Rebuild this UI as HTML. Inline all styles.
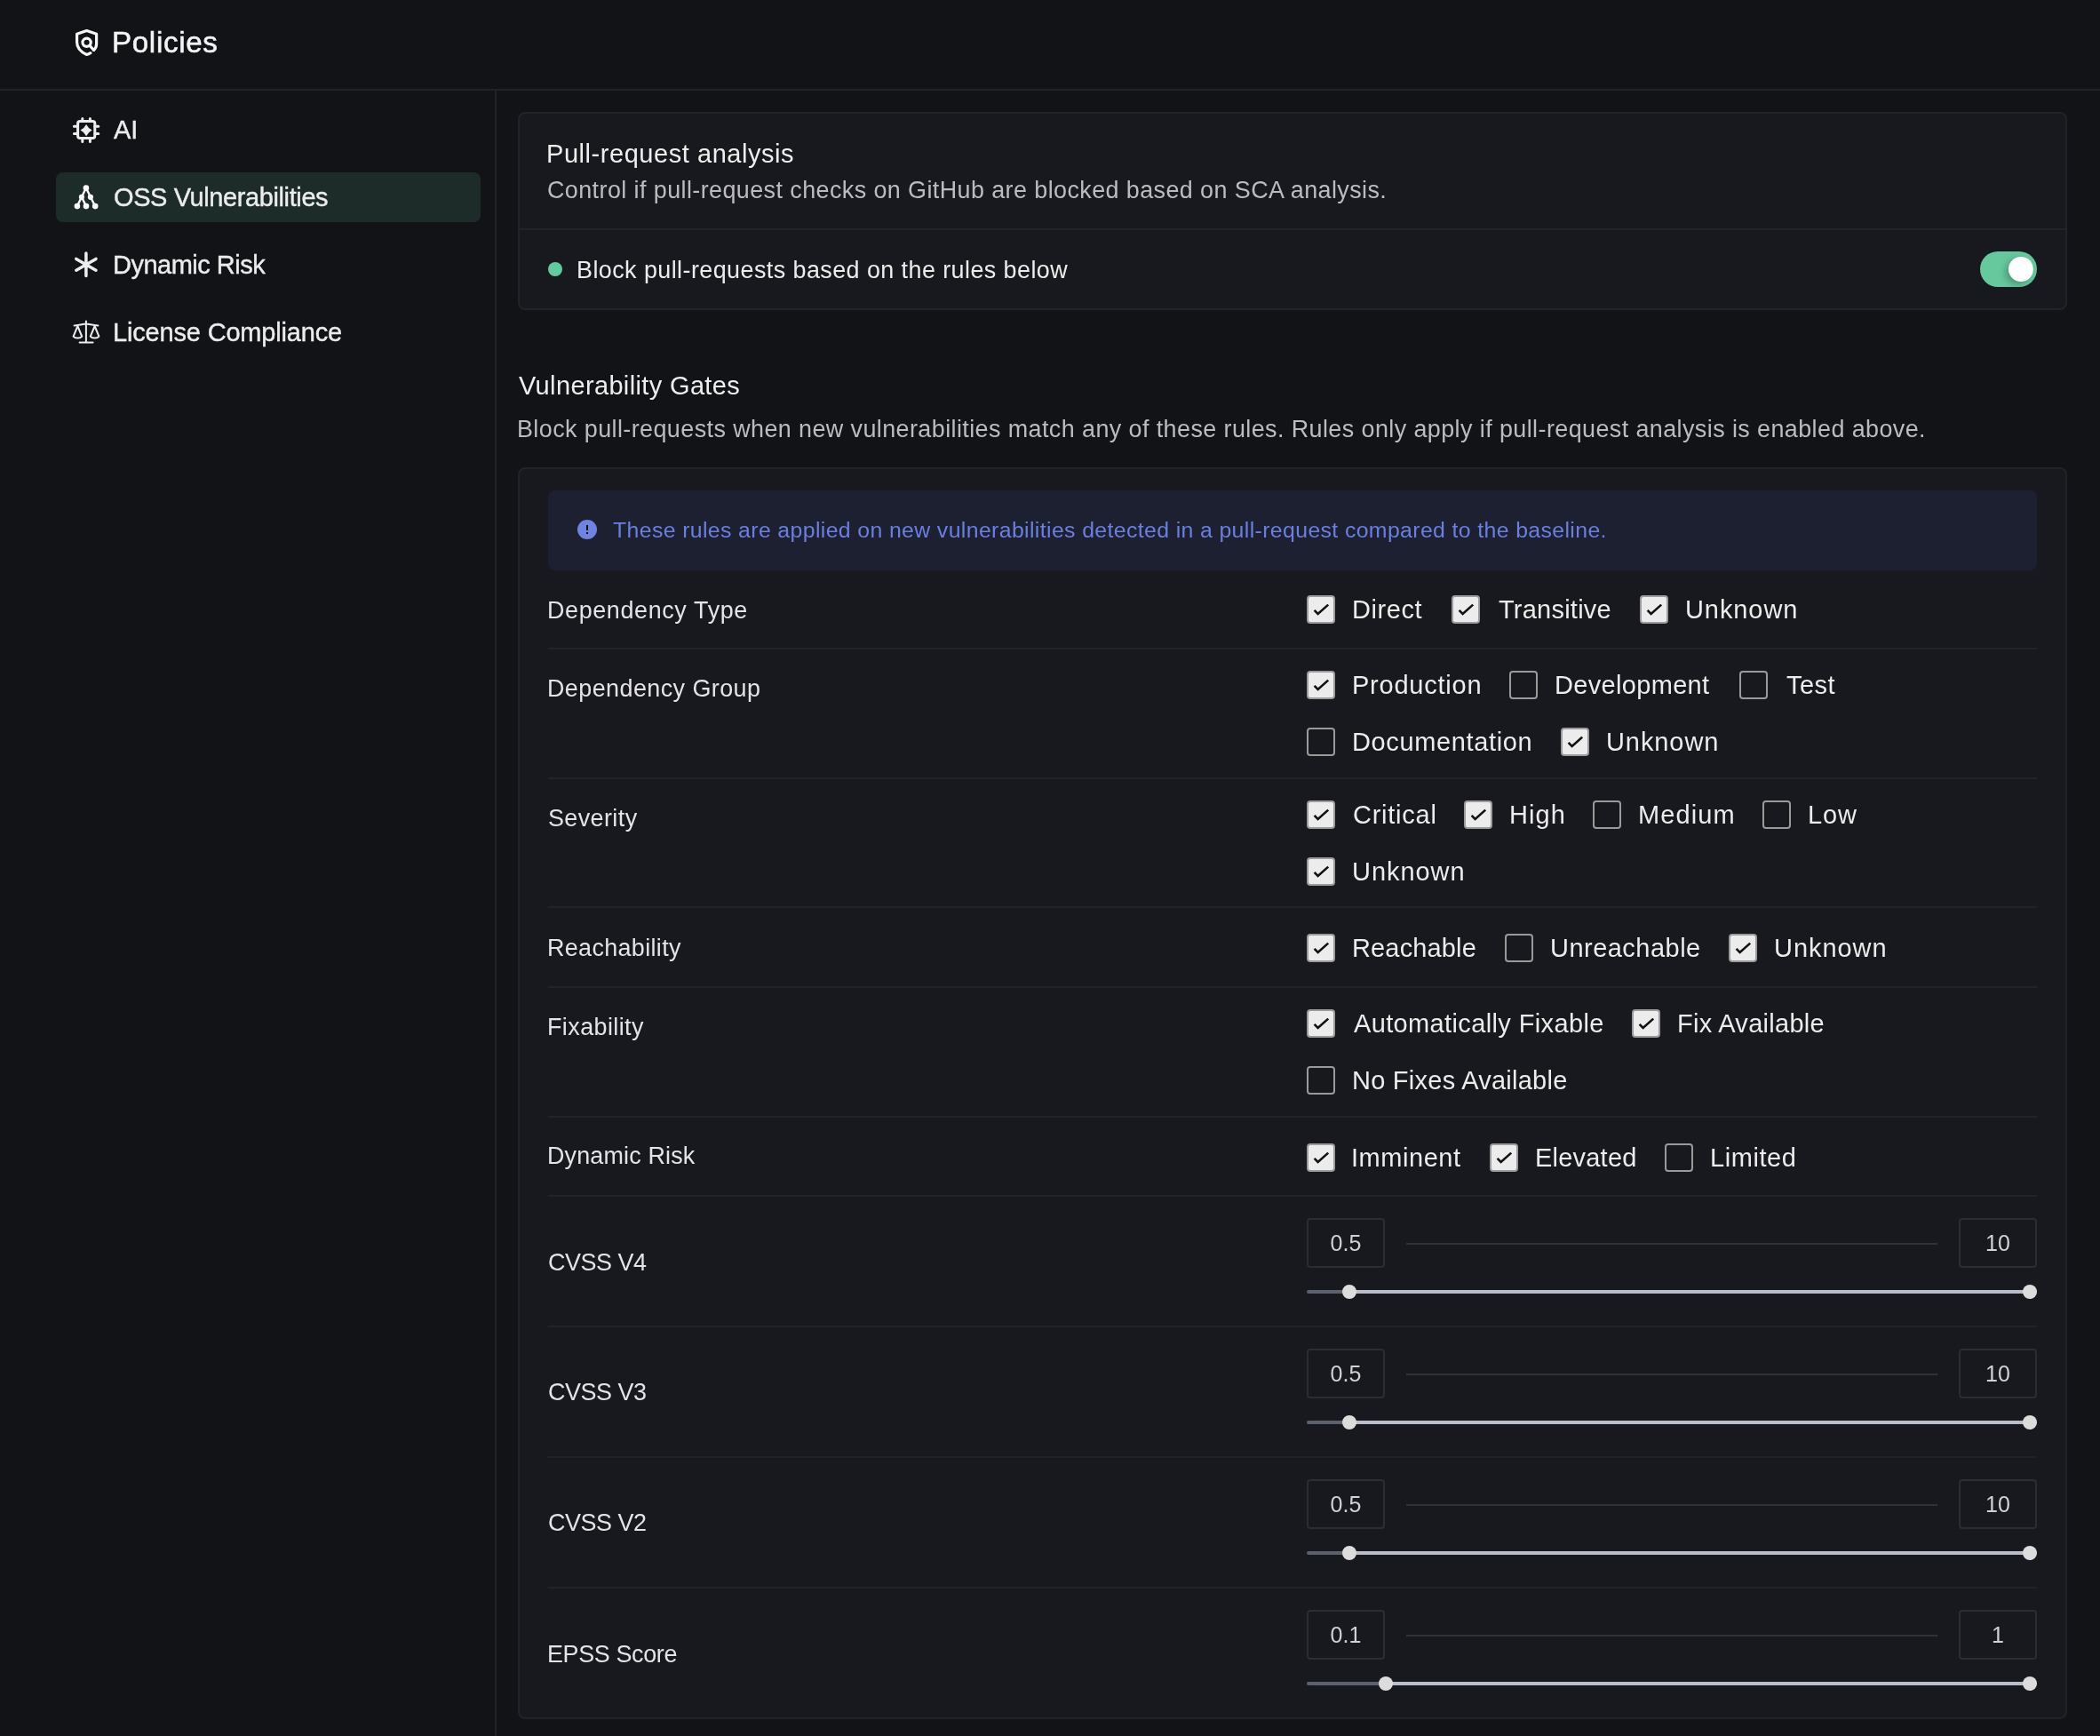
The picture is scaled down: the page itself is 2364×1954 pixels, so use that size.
<!DOCTYPE html>
<html><head><meta charset="utf-8">
<style>
html,body{-webkit-font-smoothing:antialiased;margin:0;padding:0;width:2364px;height:1954px;overflow:hidden;background:#121317;font-family:"Liberation Sans",sans-serif;}
.t{position:absolute;white-space:pre;will-change:transform;font-family:"Liberation Sans",sans-serif;}
.abs{position:absolute;}
#header{position:absolute;left:0;top:0;width:2364px;height:100px;background:#121317;border-bottom:2px solid #212226;}
#sidebar{position:absolute;left:0;top:102px;width:557px;height:1852px;border-right:2px solid #212226;}
.navhl{position:absolute;left:63px;top:194px;width:478px;height:56px;border-radius:8px;background:#1e2c29;}
.card{position:absolute;left:583px;width:1740px;background:#18191e;border:2px solid #222328;border-radius:8px;}
.hr{position:absolute;left:617px;width:1676px;height:2px;background:#222328;}
.banner{position:absolute;left:617px;top:552px;width:1676px;height:90px;border-radius:8px;background:#1d2031;}
.cb{position:absolute;width:28px;height:28px;border:2px solid #9a9a9b;border-radius:4px;}
.cb.on{background:#ececec;border-color:#9c9c9e;}
.cb svg{position:absolute;left:-2px;top:-2px;}
.inp{position:absolute;will-change:transform;font-family:"Liberation Sans",sans-serif;width:84px;height:52px;border:2px solid #2b2d35;border-radius:4px;color:#d2d2d4;font-size:25px;line-height:52px;text-align:center;letter-spacing:0px;}
.sep{position:absolute;left:1583px;width:598px;height:2px;background:#2f323a;}
.trk{position:absolute;height:4px;border-radius:2px;}
.thm{position:absolute;width:16px;height:16px;border-radius:50%;background:#dcdcdd;}
</style></head><body>
<div id="header"></div>
<div id="sidebar"></div>
<div class="navhl"></div>
<div class="card" style="top:126px;height:219px;"></div>
<div class="abs" style="left:585px;top:257px;width:1740px;height:2px;background:#222328"></div>
<div class="card" style="top:526px;height:1405px;"></div>
<div class="banner"></div>
<div class="hr" style="top:729px"></div>
<div class="hr" style="top:875px"></div>
<div class="hr" style="top:1020px"></div>
<div class="hr" style="top:1110px"></div>
<div class="hr" style="top:1256px"></div>
<div class="hr" style="top:1345px"></div>
<div class="hr" style="top:1492px"></div>
<div class="hr" style="top:1639px"></div>
<div class="hr" style="top:1786px"></div>
<svg class="abs" style="left:0;top:0" width="600" height="420" viewBox="0 0 600 420">
 <g fill="none" stroke="#f6f6f6" stroke-width="3.2" stroke-linecap="round" stroke-linejoin="round">
  <path d="M101.9 59.7C100.4 60.6 99 61.2 97.6 61.5C91 58.5 86.6 54 86.6 47.5L86.6 38.2L97.6 34.6L108.6 38.2L108.6 49.5C108.6 52 107.6 54.5 105.6 56.4"/>
  <circle cx="97.6" cy="47.8" r="4.65"/>
  <path d="M100.9 51.2L105.6 56.4"/>
 </g>
 <g fill="none" stroke="#ededee" stroke-width="3" stroke-linecap="round" stroke-linejoin="round">
  <rect x="87.6" y="136.4" width="19.2" height="19.2" rx="2.5"/>
  <path d="M92.8 133.4V136.4M101.4 133.4V136.4M92.8 155.6V159.6M101.4 155.6V159.6M83.4 142.2H87.6M83.4 150.6H87.6M106.8 142.2H110.8M106.8 150.6H110.8"/>
 </g>
 <path fill="#ededee" d="M97.1 140 Q99.3 144.4 103.7 146.6 Q99.3 148.8 97.1 153.2 Q94.9 148.8 90.5 146.6 Q94.9 144.4 97.1 140Z"/>
 <g stroke="#fafafa" stroke-width="2.4" fill="none">
  <path d="M96.9 211.5L91.9 221.8L86.9 232.1M91.9 221.8L97 232.1M96.9 211.5L101.9 221.8L107.2 232.1"/>
 </g>
 <g fill="#fafafa">
  <circle cx="96.9" cy="211.6" r="3.3"/><circle cx="91.9" cy="221.8" r="3.1"/><circle cx="101.9" cy="221.8" r="3.1"/>
  <circle cx="86.9" cy="232.1" r="3.3"/><circle cx="97" cy="232.1" r="3.3"/><circle cx="107.2" cy="232.1" r="3.3"/>
 </g>
 <g stroke="#ededee" stroke-width="3.5" stroke-linecap="round">
  <path d="M96.9 285V310.6M85.8 291.4L108 304.2M85.8 304.2L108 291.4"/>
 </g>
 <g fill="none" stroke="#ededee" stroke-width="2" stroke-linecap="round" stroke-linejoin="round">
  <path d="M96.9 361.5V385.6M89.6 385.6H104.6M83.6 366.4C90 366.4 93 364.6 96.9 364.6C100.8 364.6 103.8 366.4 110.4 366.4"/>
  <path d="M87.4 367L82.6 378.6C84.6 381.2 90.2 381.2 92.2 378.6Z"/>
  <path d="M106.6 367L101.8 378.6C103.8 381.2 109.4 381.2 111.4 378.6Z"/>
 </g>
</svg>
<svg class="abs" style="left:640px;top:575px" width="44" height="44" viewBox="0 0 44 44">
 <circle cx="21" cy="21" r="11" fill="#7083e0"/>
 <rect x="20" y="16" width="2" height="6" fill="#111318"/>
 <rect x="20" y="24" width="2" height="2" fill="#111318"/>
</svg>
<div class="abs" style="left:617px;top:295px;width:16px;height:16px;border-radius:50%;background:#66c89e"></div>
<div class="abs" style="left:2229px;top:283px;width:64px;height:40px;border-radius:20px;background:#66c99e;overflow:hidden">
  <div class="abs" style="left:32px;top:6px;width:28px;height:28px;border-radius:50%;background:#fff;box-shadow:-3px 3px 8px rgba(0,0,0,0.28)"></div>
</div>
<div class="cb on" style="left:1471.0px;top:670px"><svg width="32" height="32" viewBox="0 0 32 32"><path d="M8.6 16.9 L12.6 20.9 L24.2 10.6" fill="none" stroke="#111214" stroke-width="2.6"/></svg></div>
<div class="cb on" style="left:1634.4px;top:670px"><svg width="32" height="32" viewBox="0 0 32 32"><path d="M8.6 16.9 L12.6 20.9 L24.2 10.6" fill="none" stroke="#111214" stroke-width="2.6"/></svg></div>
<div class="cb on" style="left:1846.0px;top:670px"><svg width="32" height="32" viewBox="0 0 32 32"><path d="M8.6 16.9 L12.6 20.9 L24.2 10.6" fill="none" stroke="#111214" stroke-width="2.6"/></svg></div>
<div class="cb on" style="left:1471.0px;top:755px"><svg width="32" height="32" viewBox="0 0 32 32"><path d="M8.6 16.9 L12.6 20.9 L24.2 10.6" fill="none" stroke="#111214" stroke-width="2.6"/></svg></div>
<div class="cb" style="left:1699.4px;top:755px"></div>
<div class="cb" style="left:1957.5px;top:755px"></div>
<div class="cb" style="left:1471.0px;top:819px"></div>
<div class="cb on" style="left:1756.6px;top:819px"><svg width="32" height="32" viewBox="0 0 32 32"><path d="M8.6 16.9 L12.6 20.9 L24.2 10.6" fill="none" stroke="#111214" stroke-width="2.6"/></svg></div>
<div class="cb on" style="left:1471.0px;top:901px"><svg width="32" height="32" viewBox="0 0 32 32"><path d="M8.6 16.9 L12.6 20.9 L24.2 10.6" fill="none" stroke="#111214" stroke-width="2.6"/></svg></div>
<div class="cb on" style="left:1647.9px;top:901px"><svg width="32" height="32" viewBox="0 0 32 32"><path d="M8.6 16.9 L12.6 20.9 L24.2 10.6" fill="none" stroke="#111214" stroke-width="2.6"/></svg></div>
<div class="cb" style="left:1793.2px;top:901px"></div>
<div class="cb" style="left:1983.6px;top:901px"></div>
<div class="cb on" style="left:1471.0px;top:965px"><svg width="32" height="32" viewBox="0 0 32 32"><path d="M8.6 16.9 L12.6 20.9 L24.2 10.6" fill="none" stroke="#111214" stroke-width="2.6"/></svg></div>
<div class="cb on" style="left:1471.0px;top:1051px"><svg width="32" height="32" viewBox="0 0 32 32"><path d="M8.6 16.9 L12.6 20.9 L24.2 10.6" fill="none" stroke="#111214" stroke-width="2.6"/></svg></div>
<div class="cb" style="left:1694.1px;top:1051px"></div>
<div class="cb on" style="left:1946.0px;top:1051px"><svg width="32" height="32" viewBox="0 0 32 32"><path d="M8.6 16.9 L12.6 20.9 L24.2 10.6" fill="none" stroke="#111214" stroke-width="2.6"/></svg></div>
<div class="cb on" style="left:1471.0px;top:1136px"><svg width="32" height="32" viewBox="0 0 32 32"><path d="M8.6 16.9 L12.6 20.9 L24.2 10.6" fill="none" stroke="#111214" stroke-width="2.6"/></svg></div>
<div class="cb on" style="left:1836.6px;top:1136px"><svg width="32" height="32" viewBox="0 0 32 32"><path d="M8.6 16.9 L12.6 20.9 L24.2 10.6" fill="none" stroke="#111214" stroke-width="2.6"/></svg></div>
<div class="cb" style="left:1471.0px;top:1200px"></div>
<div class="cb on" style="left:1471.0px;top:1287px"><svg width="32" height="32" viewBox="0 0 32 32"><path d="M8.6 16.9 L12.6 20.9 L24.2 10.6" fill="none" stroke="#111214" stroke-width="2.6"/></svg></div>
<div class="cb on" style="left:1676.9px;top:1287px"><svg width="32" height="32" viewBox="0 0 32 32"><path d="M8.6 16.9 L12.6 20.9 L24.2 10.6" fill="none" stroke="#111214" stroke-width="2.6"/></svg></div>
<div class="cb" style="left:1874.3px;top:1287px"></div>
<div class="inp" style="left:1471px;top:1371px">0.5</div>
<div class="inp" style="left:2205px;top:1371px">10</div>
<div class="sep" style="top:1399px"></div>
<div class="trk" style="top:1452px;left:1471px;width:48.3px;background:#5d616b"></div>
<div class="trk" style="top:1452px;left:1519.3px;width:773.7px;background:#b8bdc7"></div>
<div class="thm" style="top:1446px;left:1511.3px"></div>
<div class="thm" style="top:1446px;left:2277px"></div>
<div class="inp" style="left:1471px;top:1518px">0.5</div>
<div class="inp" style="left:2205px;top:1518px">10</div>
<div class="sep" style="top:1546px"></div>
<div class="trk" style="top:1599px;left:1471px;width:48.3px;background:#5d616b"></div>
<div class="trk" style="top:1599px;left:1519.3px;width:773.7px;background:#b8bdc7"></div>
<div class="thm" style="top:1593px;left:1511.3px"></div>
<div class="thm" style="top:1593px;left:2277px"></div>
<div class="inp" style="left:1471px;top:1665px">0.5</div>
<div class="inp" style="left:2205px;top:1665px">10</div>
<div class="sep" style="top:1693px"></div>
<div class="trk" style="top:1746px;left:1471px;width:48.3px;background:#5d616b"></div>
<div class="trk" style="top:1746px;left:1519.3px;width:773.7px;background:#b8bdc7"></div>
<div class="thm" style="top:1740px;left:1511.3px"></div>
<div class="thm" style="top:1740px;left:2277px"></div>
<div class="inp" style="left:1471px;top:1812px">0.1</div>
<div class="inp" style="left:2205px;top:1812px">1</div>
<div class="sep" style="top:1840px"></div>
<div class="trk" style="top:1893px;left:1471px;width:88.6px;background:#5d616b"></div>
<div class="trk" style="top:1893px;left:1559.6px;width:733.4px;background:#b8bdc7"></div>
<div class="thm" style="top:1887px;left:1551.6px"></div>
<div class="thm" style="top:1887px;left:2277px"></div>
<div class="t" style="left:126.0px;top:31.16px;font-size:33.12px;line-height:33.12px;letter-spacing:0.686px;color:#f4f4f5;-webkit-text-stroke:0.55px currentColor">Policies</div>
<div class="t" style="left:128.0px;top:132.17px;font-size:28.98px;line-height:28.98px;letter-spacing:0.000px;color:#ececed;-webkit-text-stroke:0.40px currentColor">AI</div>
<div class="t" style="left:127.5px;top:207.97px;font-size:28.98px;line-height:28.98px;letter-spacing:-0.383px;color:#ececed;-webkit-text-stroke:0.40px currentColor">OSS Vulnerabilities</div>
<div class="t" style="left:127.0px;top:284.17px;font-size:28.98px;line-height:28.98px;letter-spacing:-0.491px;color:#ececed;-webkit-text-stroke:0.40px currentColor">Dynamic Risk</div>
<div class="t" style="left:127.0px;top:360.27px;font-size:28.98px;line-height:28.98px;letter-spacing:-0.159px;color:#ececed;-webkit-text-stroke:0.40px currentColor">License Compliance</div>
<div class="t" style="left:615.0px;top:159.27px;font-size:28.98px;line-height:28.98px;letter-spacing:0.565px;color:#eeeeef">Pull-request analysis</div>
<div class="t" style="left:616.0px;top:201.02px;font-size:26.91px;line-height:26.91px;letter-spacing:0.419px;color:#bcbcc0">Control if pull-request checks on GitHub are blocked based on SCA analysis.</div>
<div class="t" style="left:649.0px;top:290.82px;font-size:26.91px;line-height:26.91px;letter-spacing:0.435px;color:#ececed">Block pull-requests based on the rules below</div>
<div class="t" style="left:584.0px;top:420.27px;font-size:28.98px;line-height:28.98px;letter-spacing:0.372px;color:#eeeeef">Vulnerability Gates</div>
<div class="t" style="left:582.0px;top:470.32px;font-size:26.91px;line-height:26.91px;letter-spacing:0.419px;color:#bcbcc0">Block pull-requests when new vulnerabilities match any of these rules. Rules only apply if pull-request analysis is enabled above.</div>
<div class="t" style="left:690.0px;top:585.47px;font-size:24.84px;line-height:24.84px;letter-spacing:0.372px;color:#6b7fe0">These rules are applied on new vulnerabilities detected in a pull-request compared to the baseline.</div>
<div class="t" style="left:616.0px;top:673.52px;font-size:26.91px;line-height:26.91px;letter-spacing:0.636px;color:#e4e4e6">Dependency Type</div>
<div class="t" style="left:1522.0px;top:672.27px;font-size:28.98px;line-height:28.98px;letter-spacing:0.600px;color:#ececed">Direct</div>
<div class="t" style="left:1687.4px;top:672.27px;font-size:28.98px;line-height:28.98px;letter-spacing:0.244px;color:#ececed">Transitive</div>
<div class="t" style="left:1897.0px;top:672.27px;font-size:28.98px;line-height:28.98px;letter-spacing:0.933px;color:#ececed">Unknown</div>
<div class="t" style="left:616.0px;top:762.32px;font-size:26.91px;line-height:26.91px;letter-spacing:0.440px;color:#e4e4e6">Dependency Group</div>
<div class="t" style="left:1522.0px;top:757.27px;font-size:28.98px;line-height:28.98px;letter-spacing:0.778px;color:#ececed">Production</div>
<div class="t" style="left:1750.4px;top:757.27px;font-size:28.98px;line-height:28.98px;letter-spacing:0.340px;color:#ececed">Development</div>
<div class="t" style="left:2010.5px;top:757.27px;font-size:28.98px;line-height:28.98px;letter-spacing:0.500px;color:#ececed">Test</div>
<div class="t" style="left:1522.0px;top:821.27px;font-size:28.98px;line-height:28.98px;letter-spacing:0.650px;color:#ececed">Documentation</div>
<div class="t" style="left:1807.6px;top:821.27px;font-size:28.98px;line-height:28.98px;letter-spacing:0.933px;color:#ececed">Unknown</div>
<div class="t" style="left:617.0px;top:908.02px;font-size:26.91px;line-height:26.91px;letter-spacing:0.414px;color:#e4e4e6">Severity</div>
<div class="t" style="left:1523.0px;top:903.27px;font-size:28.98px;line-height:28.98px;letter-spacing:0.757px;color:#ececed">Critical</div>
<div class="t" style="left:1698.9px;top:903.27px;font-size:28.98px;line-height:28.98px;letter-spacing:1.100px;color:#ececed">High</div>
<div class="t" style="left:1844.2px;top:903.27px;font-size:28.98px;line-height:28.98px;letter-spacing:1.100px;color:#ececed">Medium</div>
<div class="t" style="left:2034.6px;top:903.27px;font-size:28.98px;line-height:28.98px;letter-spacing:0.950px;color:#ececed">Low</div>
<div class="t" style="left:1522.0px;top:967.27px;font-size:28.98px;line-height:28.98px;letter-spacing:0.967px;color:#ececed">Unknown</div>
<div class="t" style="left:616.0px;top:1054.02px;font-size:26.91px;line-height:26.91px;letter-spacing:0.355px;color:#e4e4e6">Reachability</div>
<div class="t" style="left:1522.0px;top:1053.27px;font-size:28.98px;line-height:28.98px;letter-spacing:0.162px;color:#ececed">Reachable</div>
<div class="t" style="left:1745.1px;top:1053.27px;font-size:28.98px;line-height:28.98px;letter-spacing:0.490px;color:#ececed">Unreachable</div>
<div class="t" style="left:1997.0px;top:1053.27px;font-size:28.98px;line-height:28.98px;letter-spacing:0.967px;color:#ececed">Unknown</div>
<div class="t" style="left:616.0px;top:1143.02px;font-size:26.91px;line-height:26.91px;letter-spacing:0.422px;color:#e4e4e6">Fixability</div>
<div class="t" style="left:1524.0px;top:1138.27px;font-size:28.98px;line-height:28.98px;letter-spacing:0.380px;color:#ececed">Automatically Fixable</div>
<div class="t" style="left:1887.6px;top:1138.27px;font-size:28.98px;line-height:28.98px;letter-spacing:0.300px;color:#ececed">Fix Available</div>
<div class="t" style="left:1522.0px;top:1202.27px;font-size:28.98px;line-height:28.98px;letter-spacing:0.265px;color:#ececed">No Fixes Available</div>
<div class="t" style="left:616.0px;top:1288.22px;font-size:26.91px;line-height:26.91px;letter-spacing:0.164px;color:#e4e4e6">Dynamic Risk</div>
<div class="t" style="left:1521.0px;top:1289.27px;font-size:28.98px;line-height:28.98px;letter-spacing:0.557px;color:#ececed">Imminent</div>
<div class="t" style="left:1727.9px;top:1289.27px;font-size:28.98px;line-height:28.98px;letter-spacing:0.229px;color:#ececed">Elevated</div>
<div class="t" style="left:1925.3px;top:1289.27px;font-size:28.98px;line-height:28.98px;letter-spacing:0.567px;color:#ececed">Limited</div>
<div class="t" style="left:617.0px;top:1407.52px;font-size:26.91px;line-height:26.91px;letter-spacing:-0.450px;color:#e4e4e6">CVSS V4</div>
<div class="t" style="left:617.0px;top:1554.22px;font-size:26.91px;line-height:26.91px;letter-spacing:-0.450px;color:#e4e4e6">CVSS V3</div>
<div class="t" style="left:617.0px;top:1701.42px;font-size:26.91px;line-height:26.91px;letter-spacing:-0.450px;color:#e4e4e6">CVSS V2</div>
<div class="t" style="left:616.0px;top:1849.02px;font-size:26.91px;line-height:26.91px;letter-spacing:-0.356px;color:#e4e4e6">EPSS Score</div>
</body></html>
